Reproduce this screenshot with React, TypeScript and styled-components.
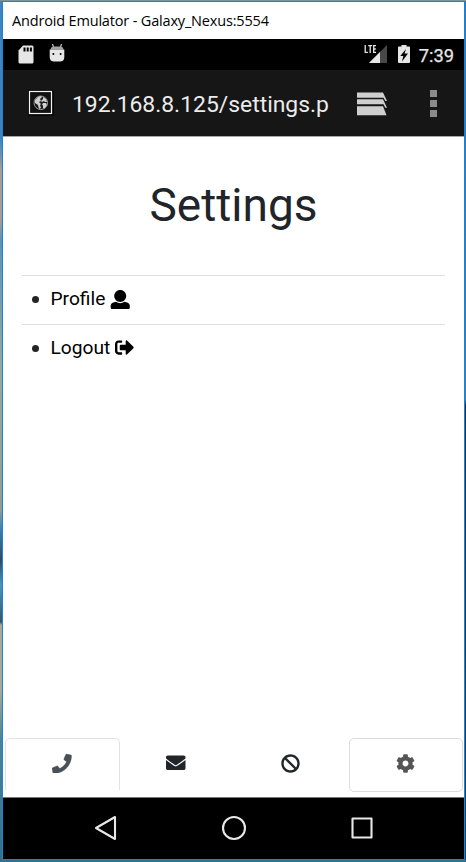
import React from "react";
import styled, { createGlobalStyle } from "styled-components";
import { FaBan, FaCog, FaEnvelope, FaSignOutAlt } from "react-icons/fa";

const GlobalStyle = createGlobalStyle`
  * { box-sizing: border-box; }
  body { margin: 0; overflow: hidden; }
`;

const Desktop = styled.div`
  height: 862px;
  width: 466px;
  padding: 1px 1px 2px 2px;
  font-family: Roboto, sans-serif;
  background:
    linear-gradient(#7b959e, #7b959e) top / 100% 1px no-repeat,
    linear-gradient(#33708f, #33708f) bottom / 100% 2px no-repeat,
    linear-gradient(#3b86c0 0, #3b86c0 140px, #a89d96 170px, #a89d96 220px, #5c94b5 240px,
      #93aaa0 370px, #929c99 510px, #3880b0 530px, #2d4b62 560px, #4795c0 585px, #35566a 622px,
      #aaa995 625px, #a6aa9a 690px, #4a8495 740px, #2f6f92 862px) left / 2px 100% no-repeat,
    linear-gradient(#277abd 0, #3180b6 400px, #17334a 405px, #204765 862px) right / 1px 100% no-repeat;
`;

const EmulatorWindow = styled.div`
  height: 859px;
  border: 1px solid #1c83d8;
  display: flex;
  flex-direction: column;
  background: #fff;
`;

const TitleBar = styled.header`
  height: 37px;
  flex: none;
  padding-left: 9px;
  font: 14.5px/37px "Open Sans", sans-serif;
  letter-spacing: -0.17px;
  color: #000;
  white-space: nowrap;
`;

const StatusBar = styled.div`
  height: 31px;
  flex: none;
  background: #000;
  color: #e6e6e6;
  display: flex;
  align-items: center;
  padding: 0 10px 0 15px;
`;

const StatusGroup = styled.div<{ $gap: number }>`
  display: flex;
  align-items: center;
  gap: ${(p) => p.$gap}px;
  padding-bottom: 1px;
`;

const Spacer = styled.div`
  flex: 1;
`;

const Clock = styled.span`
  font-size: 18.3px;
  font-weight: 400;
  -webkit-text-stroke: 0.25px #e6e6e6;
  line-height: 31px;
  padding-top: 1px;
  margin-left: 8px;
`;

const Toolbar = styled.div`
  height: 67px;
  flex: none;
  background: #161616;
  border-bottom: 1px solid #aaa5a5;
  display: flex;
  align-items: center;
  padding: 0 27px 0 25px;
`;

const Address = styled.div`
  width: 285px;
  flex: none;
  padding-left: 18px;
  padding-top: 3px;
  font-size: 22.9px;
  line-height: 30px;
  color: #ececec;
  white-space: nowrap;
`;

const TabsButton = styled.div`
  display: flex;
  margin-left: 18px;
  padding-top: 1px;
`;

const MenuDots = styled.div`
  display: flex;
  flex-direction: column;
  gap: 3px;
`;

const Dot = styled.i`
  width: 7px;
  height: 7px;
  background: #8b8b8b;
`;

const Page = styled.main`
  flex: 1;
  display: flex;
  flex-direction: column;
  color: #212529;
`;

const Heading = styled.h1`
  margin: 40px 0 42px;
  text-align: center;
  font-weight: 400;
  font-size: 46px;
  line-height: 56px;
`;

const SettingsList = styled.ul`
  list-style: none;
  margin: 0 19px;
  padding: 0;
  flex: 1;
`;

const SettingsItem = styled.li`
  border-top: 1px solid #dedede;
  height: 48.6px;
  display: flex;
  align-items: center;
  padding: 0 0 1px 10px;
`;

const Bullet = styled.i`
  width: 7px;
  height: 7px;
  border-radius: 50%;
  background: #212529;
  margin: 1px 11.5px 0 0;
`;

const ItemLink = styled.a`
  color: #000;
  font-size: 19.2px;
  line-height: 28px;
  display: flex;
  align-items: center;
  gap: 5px;
`;

const Tabs = styled.nav`
  height: 60px;
  flex: none;
  padding: 0 0 4px 2px;
  border-bottom: 1px solid #777;
  display: grid;
  grid-template-columns: 115px 114px 115px 114px;
`;

const Tab = styled.button<{ $frame?: "open" | "closed"; $color?: string }>`
  appearance: none;
  background: none;
  margin: 0;
  padding: 0 ${(p) => (p.$frame ? 1 : 2)}px ${(p) => (p.$frame === "open" ? 2 : 4)}px 0;
  height: ${(p) => (p.$frame === "open" ? 52 : 54)}px;
  border: 1px solid ${(p) => (p.$frame === "open" ? "#dee2e6" : p.$frame ? "#dcdcdc" : "transparent")};
  ${(p) => p.$frame === "open" && "border-bottom: 0;"}
  border-radius: ${(p) => (p.$frame === "open" ? "5px 5px 0 0" : "5px")};
  color: ${(p) => p.$color ?? "#212529"};
  display: flex;
  align-items: center;
  justify-content: center;
`;

const AndroidNav = styled.footer`
  height: 61px;
  flex: none;
  background: #000;
  display: flex;
  align-items: center;
  justify-content: center;
  gap: 102px;
  padding-bottom: 1px;
`;

const SdCard = () => (
  <svg width="16" height="19" viewBox="0 0 16 19">
    <path d="M5 .5h9q1.500 0 1.500 1.500v15q0 1.500-1.500 1.500H2Q.5 18.500.5 17V5.500z" fill="#e6e6e6" />
    <path d="M5.500 2.500h2v4h-2zM8.700 2.500h2v4h-2zM11.900 2.500h2v4h-2z" fill="#000" />
  </svg>
);

const AndroidHead = () => (
  <svg width="16" height="20" viewBox="0 0 16 20">
    <path d="M3.500 0l1.200 4M12.500 0l-1.200 4" stroke="#b5b5b5" strokeWidth="1.300" />
    <path d="M1.500 5.500Q2 2.500 5 2.500h6q3 0 3.500 3z" fill="#a5a5a5" />
    <path d="M.700 5.500h14.600v7.500q0 4.500-4.500 4.500H5.200Q.700 17.500 .700 13z" fill="#e6e6e6" />
    <circle cx="4.400" cy="10" r="1" />
    <circle cx="11.600" cy="10" r="1" />
  </svg>
);

const Signal = () => (
  <svg width="24" height="20" viewBox="0 0 24 20">
    <path d="M23 1v18H5z" fill="#484848" />
    <path d="M16 8v11H5z" fill="#e6e6e6" />
    <path d="M1.200 1v7.300h2.700M4.200 1.700h4M6.200 1.700v7.200M12 1.700H9.700v6.600H12M9.700 5h2.100" fill="none" stroke="#e6e6e6" strokeWidth="1.300" />
  </svg>
);

const Battery = () => (
  <svg width="14" height="20" viewBox="0 0 14 20">
    <path d="M4.500 1h5v1.500H12q1 0 1 1V18q0 1-1 1H2q-1 0-1-1V3.500q0-1 1-1h2.500z" fill="#e6e6e6" />
    <path d="M9 5L3.300 12h3L5 17.500l6-8H7.500z" fill="#000" />
  </svg>
);

const SiteIcon = () => (
  <svg width="26" height="26" viewBox="0 0 26 26">
    <rect width="26" height="26" fill="#080808" />
    <rect x="1.500" y="1.500" width="22" height="22" fill="#111" stroke="#f4f4f4" strokeWidth="1.200" />
    <circle cx="12.800" cy="12.800" r="6.800" fill="#1d1d1d" stroke="#999" />
    <path d="M7 10l3-3 3-1 1 1-2 2 1 2-2 1 2 2-1 1 1 3-2 1-1-4-3-2zM15 7l3 2 1 3-2 0-1-1-2 1-1-1 2-2zM15 13l3 0 1 2-2 3-2 .500 0-3-1-1z" fill="#d0d0d0" />
  </svg>
);

const TabStack = () => (
  <svg width="31" height="24" viewBox="0 0 31 24">
    <path d="M0 .500h26l4 8.500h-1.700l-1.800-3.300H0zM0 7.200h26l4 8.500h-1.700l-1.800-3.500H0zM0 14.300h26l3.500 9H0z" fill="#cfcfcf" />
  </svg>
);

const UserIcon = () => (
  <svg width="20" height="19.200" viewBox="-12 0 524 512">
    <path d="M256 0c88.366 0 160 71.634 160 160 0 88.365-71.634 160-160 160S96 248.365 96 160C96 71.634 167.634 0 256 0zm183.283 333.821l-71.313-17.828c-74.923 53.890-165.738 41.864-223.940 0l-71.313 17.828C29.981 344.505 0 382.903 0 426.955V464c0 26.510 21.490 48 48 48h416c26.510 0 48-21.490 48-48v-37.045c0-44.052-29.981-82.450-72.717-93.134z" />
  </svg>
);

const PhoneIcon = () => (
  <svg width="19.500" height="19.500" viewBox="0 0 512 512" fill="currentColor" stroke="currentColor" strokeWidth="10">
    <path d="M493.397 24.615l-104-23.997c-11.314-2.611-22.879 3.252-27.456 13.931l-48 111.997a24 24 0 0 0 6.862 28.029l60.617 49.596c-35.973 76.675-98.938 140.508-177.249 177.248l-49.595-60.616a24 24 0 0 0-28.029-6.862l-111.997 48C3.873 366.516-1.994 378.081.618 389.397l23.997 104C27.109 504.204 36.748 512 48 512c256.087 0 464-207.532 464-464 0-11.176-7.714-20.873-18.603-23.385z" />
  </svg>
);

const navIcon = { width: 26, height: 26, viewBox: "0 0 26 26", fill: "none", stroke: "#e8e8e8", strokeWidth: 2.1, strokeLinejoin: "round" as const };

export default function App() {
  return (
    <Desktop>
      <GlobalStyle />
      <EmulatorWindow>
        <TitleBar>Android Emulator - Galaxy_Nexus:5554</TitleBar>
        <StatusBar>
          <StatusGroup $gap={15}>
            <SdCard />
            <AndroidHead />
          </StatusGroup>
          <Spacer />
          <StatusGroup $gap={9}>
            <Signal />
            <Battery />
          </StatusGroup>
          <Clock>7:39</Clock>
        </StatusBar>
        <Toolbar>
          <SiteIcon />
          <Address>192.168.8.125/settings.p</Address>
          <TabsButton>
            <TabStack />
          </TabsButton>
          <Spacer />
          <MenuDots>
            <Dot />
            <Dot />
            <Dot />
          </MenuDots>
        </Toolbar>
        <Page>
          <Heading>Settings</Heading>
          <SettingsList>
            <SettingsItem>
              <Bullet />
              <ItemLink>Profile <UserIcon /></ItemLink>
            </SettingsItem>
            <SettingsItem>
              <Bullet />
              <ItemLink>Logout <FaSignOutAlt size={19} /></ItemLink>
            </SettingsItem>
          </SettingsList>
          <Tabs>
            <Tab $frame="open" $color="#495057" aria-label="Calls"><PhoneIcon /></Tab>
            <Tab aria-label="Messages"><FaEnvelope size={19.500} /></Tab>
            <Tab aria-label="Blocked"><FaBan size={19} /></Tab>
            <Tab $frame="closed" $color="#555" aria-label="Settings"><FaCog size={19} /></Tab>
          </Tabs>
        </Page>
        <AndroidNav>
          <svg {...navIcon}><path d="M22 2v22L3 13z" /></svg>
          <svg {...navIcon}><circle cx="13" cy="13" r="11" /></svg>
          <svg {...navIcon}><rect x="3.500" y="3.500" width="19" height="19" /></svg>
        </AndroidNav>
      </EmulatorWindow>
    </Desktop>
  );
}
